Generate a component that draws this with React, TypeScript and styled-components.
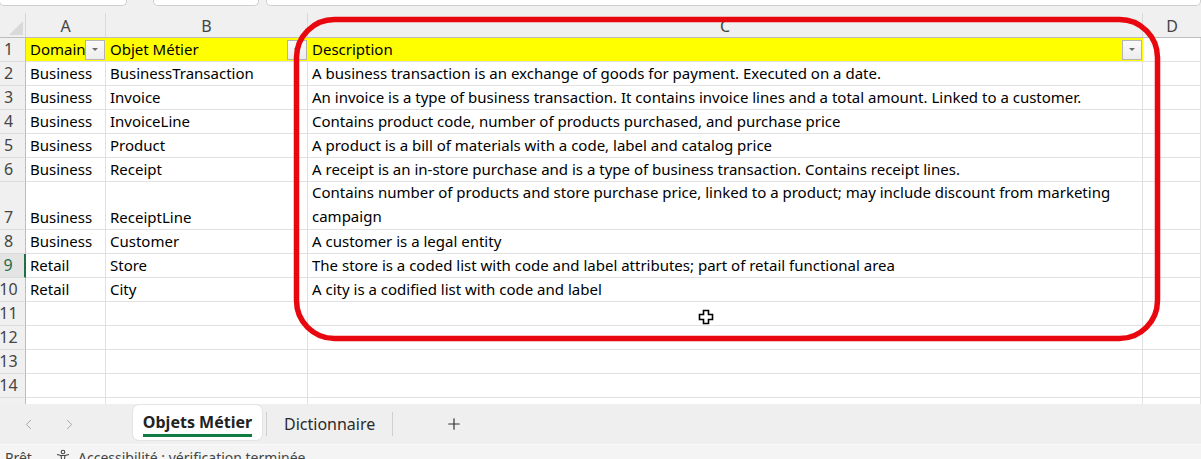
import React from 'react';
import styled, { createGlobalStyle } from 'styled-components';
import { ChevronLeft, ChevronRight, Plus } from 'lucide-react';

const GlobalStyle = createGlobalStyle`
  html, body { margin: 0; padding: 0; background: #f0f0f0; }
  * { box-sizing: border-box; }
`;

const COLS = '26px 80px 202px 835px 1fr';
const CELL_FONT = `"Noto Sans", "Open Sans", sans-serif`;
const UI_FONT = `"Noto Sans", "Open Sans", sans-serif`;

const Page = styled.div`
  position: relative;
  width: 1201px;
  height: 459px;
  overflow: hidden;
  display: flex;
  flex-direction: column;
  background: #f0f0f0;
`;

const TopStrip = styled.div`
  flex: none;
  height: 13px;
  display: flex;
  align-items: flex-start;
  background: #f0f0f0;
`;

const StripBox = styled.div<{ $w: number; $ml: number; $grow?: boolean }>`
  height: 6px;
  width: ${p => (p.$grow ? 'auto' : `${p.$w}px`)};
  flex: ${p => (p.$grow ? 1 : 'none')};
  margin-left: ${p => p.$ml}px;
  background: #fff;
  border: 1px solid #cfcfcf;
  border-top: none;
  border-radius: 0 0 5px 5px;
`;

const Sheet = styled.div`
  flex: none;
  height: 391px;
  overflow: hidden;
  background: #fff;
`;

const HeaderRow = styled.div`
  display: grid;
  grid-template-columns: ${COLS};
  height: 25px;
  background: #f0f0f0;
  border-bottom: 1px solid #bdbdbd;
`;

const Corner = styled.div`
  position: relative;
  border-right: 1px solid #d6d6d6;
`;

const CornerTriangle = styled.div`
  position: absolute;
  right: 2px;
  bottom: 2px;
  width: 0;
  height: 0;
  border-left: 14px solid transparent;
  border-bottom: 14px solid #d9d9d9;
`;

const ColLetter = styled.div`
  display: flex;
  align-items: center;
  justify-content: center;
  padding-top: 2px;
  border-right: 1px solid #dadada;
  font-family: ${CELL_FONT};
  font-size: 16px;
  color: #444;
  &:last-child { border-right: none; }
`;

const Row = styled.div<{ $tall?: boolean }>`
  display: grid;
  grid-template-columns: ${COLS};
  height: ${p => (p.$tall ? 48 : 24)}px;
`;

const RowNum = styled.div<{ $active?: boolean }>`
  display: flex;
  align-items: flex-end;
  justify-content: center;
  padding: 0 8px 1px 0;
  background: ${p => (p.$active ? '#e4e4e4' : '#f0f0f0')};
  border-right: ${p => (p.$active ? '2px solid #1e7145' : '1px solid #bdbdbd')};
  border-bottom: 1px solid #dadada;
  font-family: ${CELL_FONT};
  font-size: 16px;
  line-height: 22px;
  color: ${p => (p.$active ? '#1e6b4a' : '#444')};
`;

const Cell = styled.div<{ $fill?: boolean; $wrap?: boolean }>`
  display: flex;
  align-items: flex-end;
  min-width: 0;
  padding: 0 0 1px 4px;
  background: ${p => (p.$fill ? '#ffff00' : '#fff')};
  border-right: 1px solid ${p => (p.$fill ? '#ffff00' : '#e1e1e1')};
  border-bottom: 1px solid #e1e1e1;
  font-family: ${CELL_FONT};
  font-size: 15px;
  line-height: ${p => (p.$wrap ? '24px' : '22px')};
  color: #000;
  white-space: nowrap;
  overflow: hidden;
`;

const CellText = styled.span`
  flex: 1;
  min-width: 0;
  overflow: hidden;
`;

const FilterButton = styled.div`
  flex: none;
  align-self: center;
  width: 20px;
  height: 20px;
  margin-top: 1px;
  display: flex;
  align-items: center;
  justify-content: center;
  background: linear-gradient(#fafafa, #ededed);
  border: 1px solid #b4b4b4;
`;

const FilterArrow = styled.div`
  width: 0;
  height: 0;
  border-left: 3.5px solid transparent;
  border-right: 3.5px solid transparent;
  border-top: 3.5px solid #6a6a6a;
`;

const TabBar = styled.div`
  flex: none;
  height: 40px;
  display: flex;
  align-items: stretch;
  background: #efefef;
`;

const NavArea = styled.div`
  width: 133px;
  display: flex;
  align-items: center;
  gap: 24px;
  padding-left: 20px;
  color: #a6a6a6;
`;

const ActiveTab = styled.div`
  margin-top: 1px;
  margin-bottom: 4px;
  width: 129px;
  display: flex;
  flex-direction: column;
  align-items: center;
  justify-content: center;
  background: #fff;
  border-radius: 6px;
  box-shadow: 0 0 0 1px #e4e4e4;
  font-family: ${UI_FONT};
  font-weight: 700;
  font-size: 16px;
  color: #222;
`;

const TabLabel = styled.span`
  padding-top: 2px;
  border-bottom: 3px solid #107c41;
  line-height: 24px;
`;

const TabSep = styled.div<{ $ml: number }>`
  width: 1px;
  margin: 8px 0 8px ${p => p.$ml}px;
  background: #cfcfcf;
`;

const Tab = styled.div`
  display: flex;
  align-items: center;
  padding: 0 17px;
  font-family: ${UI_FONT};
  font-size: 16px;
  color: #2a2a2a;
`;

const AddButton = styled.div`
  display: flex;
  align-items: center;
  margin-left: 52px;
  color: #333;
`;

const StatusBar = styled.div`
  flex: 1;
  min-height: 0;
  overflow: hidden;
  display: flex;
  align-items: flex-start;
  padding: 4px 0 0 5px;
  background: #f4f4f4;
  border-top: 1px solid #fafafa;
  font-family: ${UI_FONT};
  font-size: 14px;
  color: #444;
  line-height: 18px;
`;

const StatusItem = styled.span<{ $w?: number }>`
  flex: none;
  display: inline-flex;
  align-items: flex-start;
  gap: 7px;
  width: ${p => (p.$w ? `${p.$w}px` : 'auto')};
`;

const Overlay = styled.svg`
  position: absolute;
  left: 0;
  top: 0;
  pointer-events: none;
`;

type RowData = { n: number; a: string; b: string; c: React.ReactNode; tall?: boolean };

const rows: RowData[] = [
  { n: 2, a: 'Business', b: 'BusinessTransaction', c: 'A business transaction is an exchange of goods for payment. Executed on a date.' },
  { n: 3, a: 'Business', b: 'Invoice', c: 'An invoice is a type of business transaction. It contains invoice lines and a total amount. Linked to a customer.' },
  { n: 4, a: 'Business', b: 'InvoiceLine', c: 'Contains product code, number of products purchased, and purchase price' },
  { n: 5, a: 'Business', b: 'Product', c: 'A product is a bill of materials with a code, label and catalog price' },
  { n: 6, a: 'Business', b: 'Receipt', c: 'A receipt is an in-store purchase and is a type of business transaction. Contains receipt lines.' },
  {
    n: 7,
    a: 'Business',
    b: 'ReceiptLine',
    c: (
      <>
        Contains number of products and store purchase price, linked to a product; may include discount from marketing
        <br />
        campaign
      </>
    ),
    tall: true,
  },
  { n: 8, a: 'Business', b: 'Customer', c: 'A customer is a legal entity' },
  { n: 9, a: 'Retail', b: 'Store', c: 'The store is a coded list with code and label attributes; part of retail functional area' },
  { n: 10, a: 'Retail', b: 'City', c: 'A city is a codified list with code and label' },
];

const Filter = () => (
  <FilterButton>
    <FilterArrow />
  </FilterButton>
);

const AccessIcon = () => (
  <svg width="16" height="16" viewBox="0 0 16 16" fill="none" stroke="#444" strokeWidth="1.1">
    <circle cx="8" cy="3" r="1.8" />
    <path d="M2 5.5 L6 6.5 L10 6.5 L14 5.5" />
    <path d="M6 6.5 L6.5 10 L5 15" />
    <path d="M10 6.5 L9.5 10 L11 15" />
  </svg>
);

export default function App() {
  return (
    <Page>
      <GlobalStyle />
      <TopStrip>
        <StripBox $w={128} $ml={-1} />
        <StripBox $w={106} $ml={26} />
        <StripBox $w={0} $ml={7} $grow />
      </TopStrip>
      <Sheet>
        <HeaderRow>
          <Corner>
            <CornerTriangle />
          </Corner>
          <ColLetter>A</ColLetter>
          <ColLetter>B</ColLetter>
          <ColLetter>C</ColLetter>
          <ColLetter>D</ColLetter>
        </HeaderRow>
        <Row>
          <RowNum>1</RowNum>
          <Cell $fill>
            <CellText>Domain</CellText>
            <Filter />
          </Cell>
          <Cell $fill>
            <CellText>Objet Métier</CellText>
            <Filter />
          </Cell>
          <Cell $fill>
            <CellText>Description</CellText>
            <Filter />
          </Cell>
          <Cell />
        </Row>
        {rows.map(r => (
          <Row key={r.n} $tall={r.tall}>
            <RowNum $active={r.n === 9}>{r.n}</RowNum>
            <Cell>{r.a}</Cell>
            <Cell>{r.b}</Cell>
            <Cell $wrap={r.tall}>
              <CellText>{r.c}</CellText>
            </Cell>
            <Cell />
          </Row>
        ))}
        {[11, 12, 13, 14, 15].map(n => (
          <Row key={n}>
            <RowNum>{n < 15 ? n : ''}</RowNum>
            <Cell />
            <Cell />
            <Cell />
            <Cell />
          </Row>
        ))}
      </Sheet>
      <TabBar>
        <NavArea>
          <ChevronLeft size={17} strokeWidth={1.4} />
          <ChevronRight size={17} strokeWidth={1.4} />
        </NavArea>
        <ActiveTab>
          <TabLabel>Objets Métier</TabLabel>
        </ActiveTab>
        <TabSep $ml={4} />
        <Tab>Dictionnaire</Tab>
        <TabSep $ml={0} />
        <AddButton>
          <Plus size={18} strokeWidth={1.6} />
        </AddButton>
      </TabBar>
      <StatusBar>
        <StatusItem $w={50}>Prêt</StatusItem>
        <StatusItem>
          <AccessIcon />
          Accessibilité : vérification terminée
        </StatusItem>
      </StatusBar>
      <Overlay width="1201" height="459" viewBox="0 0 1201 459">
        <rect x="296.5" y="19.5" width="861" height="319" rx="38" ry="38" fill="none" stroke="#e8070f" strokeWidth="5.5" />
        <path
          d="M703.5 310.5 h5 v4 h4 v5 h-4 v4 h-5 v-4 h-4 v-5 h4 z"
          fill="#fff"
          stroke="#000"
          strokeWidth="1.6"
          strokeLinejoin="miter"
        />
      </Overlay>
    </Page>
  );
}
